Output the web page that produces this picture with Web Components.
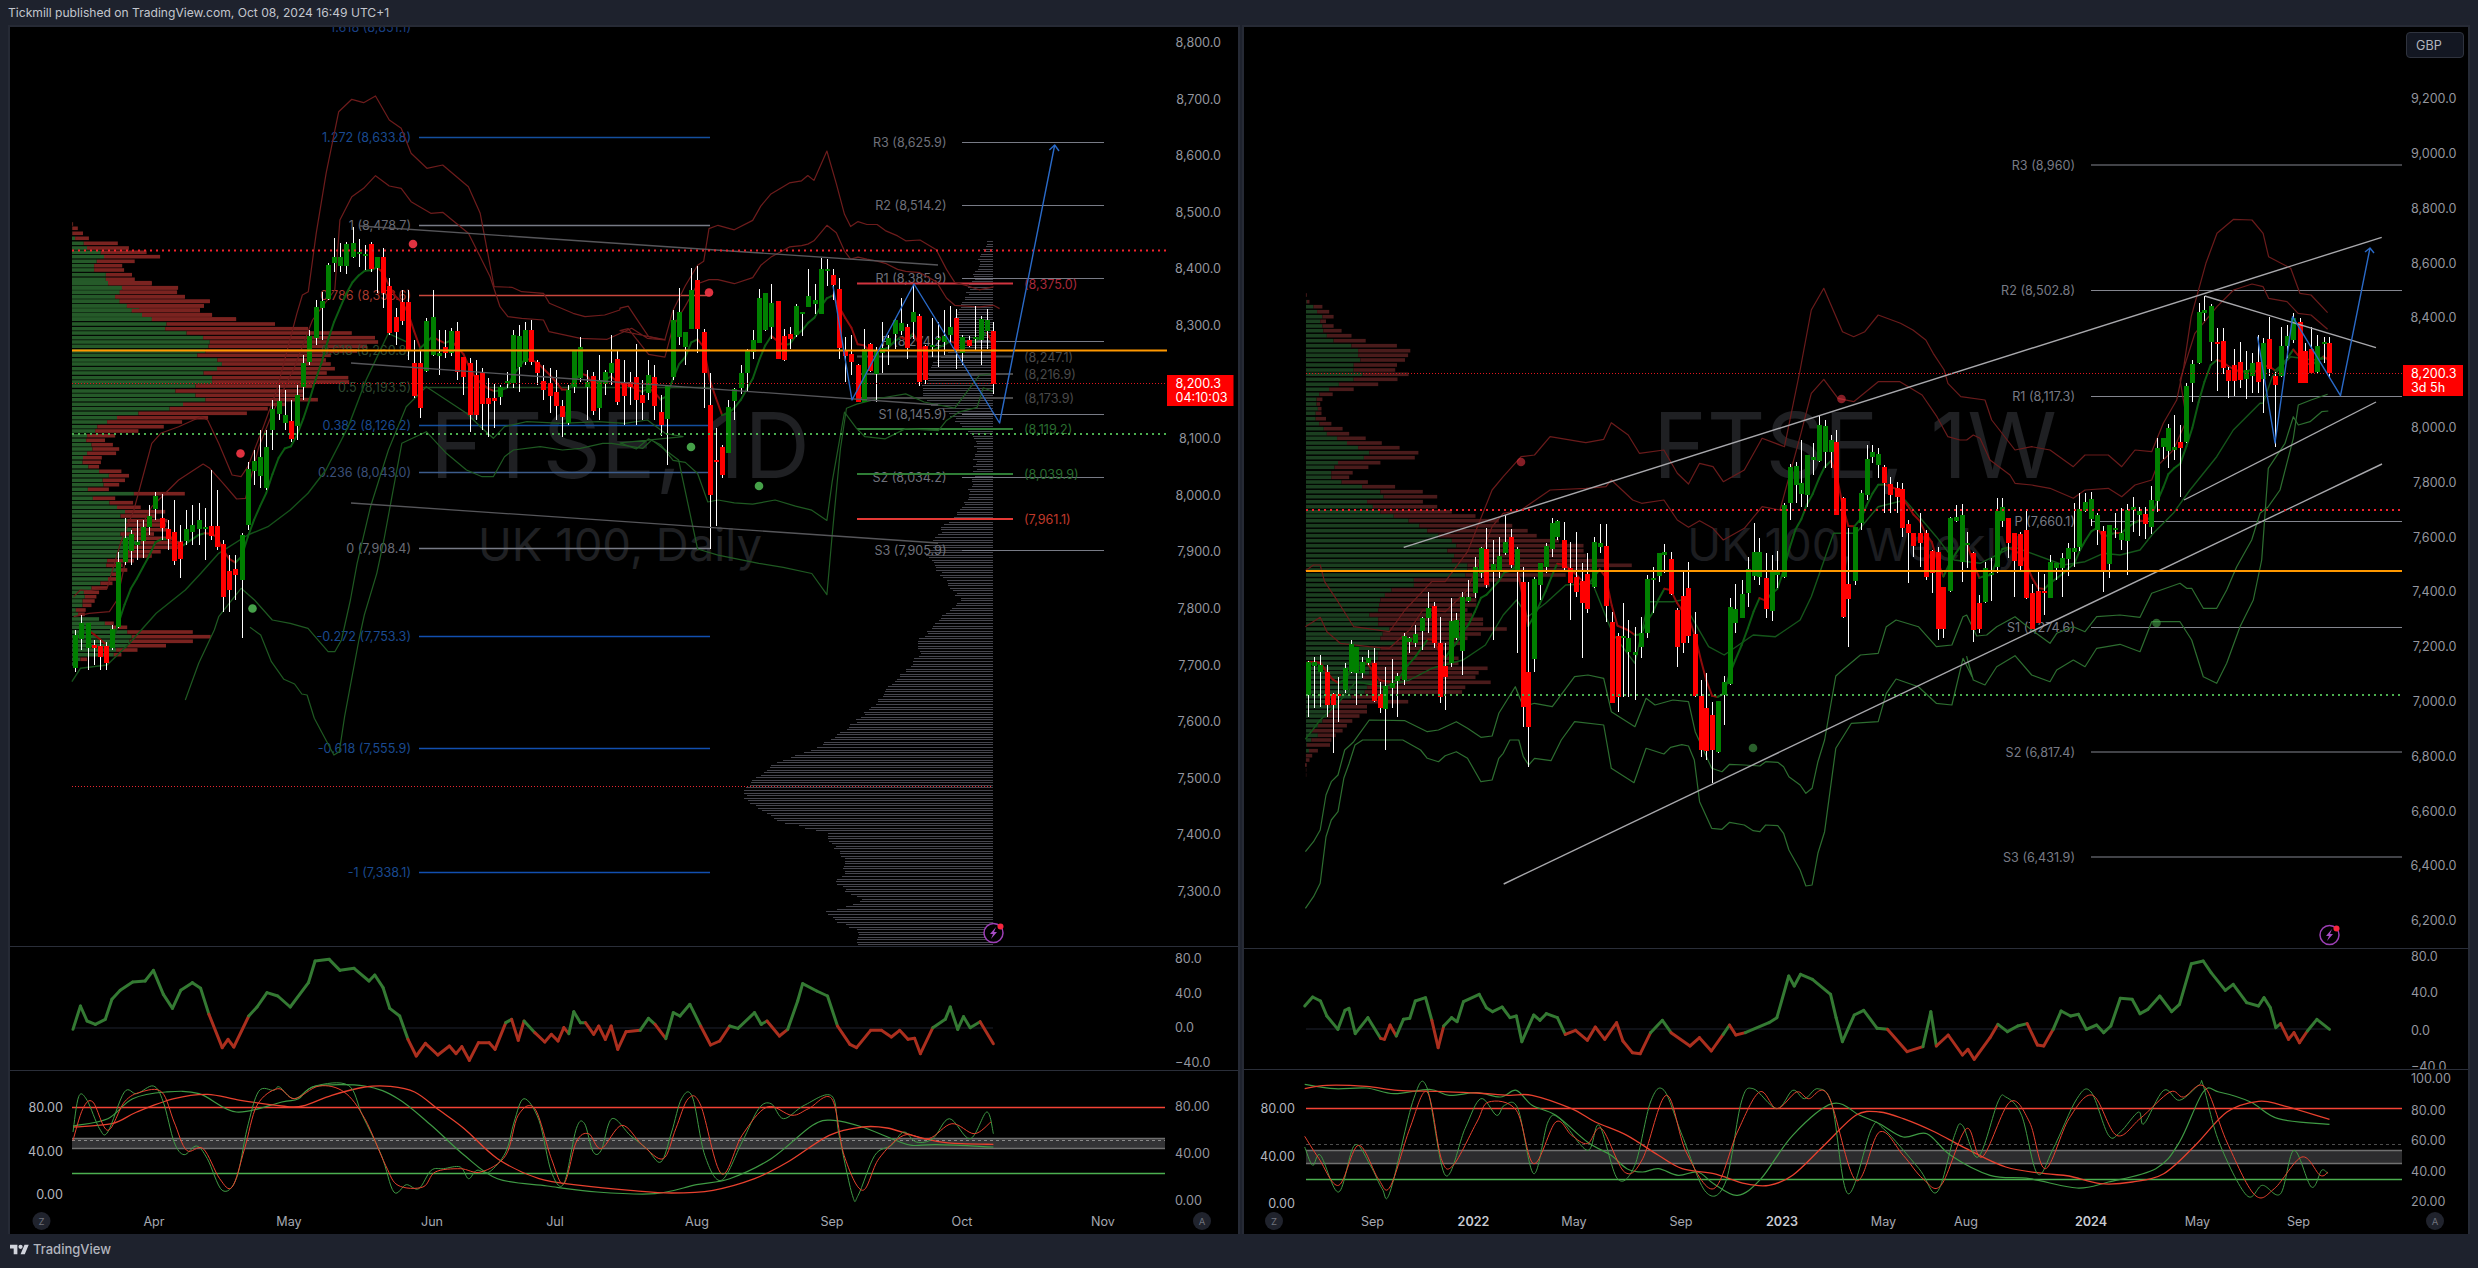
<!DOCTYPE html>
<html>
<head>
<meta charset="utf-8">
<title>FTSE snapshot</title>
<style>
  html, body { margin: 0; padding: 0; background: #1e222d; }
</style>
</head>
<body>
<tv-snapshot></tv-snapshot>
<script>
// ---------- helpers ----------
const fromCrop = (str, ox, fx, oy, fy) => str.trim().split(/\s+/).map(p => {
    const [x, y] = p.split(',').map(Number);
    return [ox + x / fx, oy + y / fy];
});
const toPoints = pts => pts.map(p => p[0].toFixed(1) + ',' + p[1].toFixed(1)).join(' ');
const line = (pts, color, w = 1, extra = '') =>
    `<polyline points="${toPoints(pts)}" fill="none" stroke="${color}" stroke-width="${w}" stroke-linejoin="round" ${extra}/>`;
// rounded version for the stochastic lines
function curve(pts, color, w = 1) {
    let d = `M${pts[0][0].toFixed(1)} ${pts[0][1].toFixed(1)}`;
    for (let i = 0; i < pts.length - 1; i++) {
        const a = pts[Math.max(i - 1, 0)], b = pts[i], c = pts[i + 1], e = pts[Math.min(i + 2, pts.length - 1)];
        const c1 = [b[0] + (c[0] - a[0]) / 6, b[1] + (c[1] - a[1]) / 6], c2 = [c[0] - (e[0] - b[0]) / 6, c[1] - (e[1] - b[1]) / 6];
        d += `C${c1[0].toFixed(1)} ${c1[1].toFixed(1)} ${c2[0].toFixed(1)} ${c2[1].toFixed(1)} ${c[0].toFixed(1)} ${c[1].toFixed(1)}`;
    }
    return `<path d="${d}" fill="none" stroke="${color}" stroke-width="${w}"/>`;
}
const hline = (x1, x2, y, color, w = 1, extra = '') =>
    `<line x1="${x1}" x2="${x2}" y1="${y}" y2="${y}" stroke="${color}" stroke-width="${w}" ${extra}/>`;
const label = (x, y, text, color, anchor = 'start', extra = '') =>
    `<text x="${x}" y="${y}" fill="${color}" text-anchor="${anchor}" dominant-baseline="central" ${extra}>${text}</text>`;

function candles(bars, bodyW) {
    let wicks = '', bodies = '';
    bars.forEach(b => {
        const hi = Math.min(b.hi, b.top), lo = Math.max(b.lo, b.bot);
        const x = Math.round(b.x);
        wicks += `<rect x="${x}" y="${hi}" width="1" height="${lo - hi}" fill="#fff"/>`;
        bodies += `<rect x="${x - (bodyW - 1) / 2}" y="${b.top}" width="${bodyW}" height="${Math.max(b.bot - b.top, 2)}" fill="${b.c === 'g' ? '#008000' : '#ff0000'}"/>`;
    });
    return `<g shape-rendering="crispEdges">${wicks}${bodies}</g>`;
}

function emaLine(bars, period) {
    const k = 2 / (period + 1);
    let prev = null, out = '', v = null;
    bars.forEach(b => {
        const close = b.c === 'g' ? b.top : b.bot;
        v = v === null ? close : v + (close - v) * k;
        if (prev) {
            const col = v < prev[1] ? '#0c5c12' : '#8f0b0b';
            out += `<line x1="${prev[0]}" y1="${prev[1]}" x2="${b.x}" y2="${v}" stroke="${col}" stroke-width="2" stroke-linecap="round"/>`;
        }
        prev = [b.x, v];
    });
    return out;
}

function profileRows(rows, x0, ox, fx, oy, fy, gCol, rCol, h = 3.6) {
    return '<g>' + rows.trim().split(/\s+/).map(r => {
        const [y, g, e] = r.split(',').map(Number);
        const py = oy + y / fy - h / 2, gx = ox + g / fx, ex = ox + e / fx;
        return `<rect x="${x0}" y="${py.toFixed(1)}" width="${Math.max(gx - x0, 0).toFixed(1)}" height="${h}" fill="${gCol}"/>` +
               `<rect x="${gx.toFixed(1)}" y="${py.toFixed(1)}" width="${Math.max(ex - gx, 0).toFixed(1)}" height="${h}" fill="${rCol}"/>`;
    }).join('') + '</g>';
}

function oscLine(pts, zeroY, gCol, rCol) {
    let out = '';
    for (let i = 1; i < pts.length; i++) {
        const col = (pts[i][1] + pts[i - 1][1]) / 2 < zeroY ? gCol : rCol;
        out += `<line x1="${pts[i - 1][0]}" y1="${pts[i - 1][1]}" x2="${pts[i][0]}" y2="${pts[i][1]}" stroke="${col}" stroke-width="3" stroke-linecap="round"/>`;
    }
    return out;
}

const bolt = (cx, cy) => `
    <circle cx="${cx}" cy="${cy}" r="9.5" fill="#000" stroke="#9c3fb5" stroke-width="1.5"/>
    <path d="M${cx + 2.5} ${cy - 6} L${cx - 3.5} ${cy + 1} H${cx - 0.5} L${cx - 2.5} ${cy + 6} L${cx + 3.5} ${cy - 1} H${cx + 0.5} Z" fill="#a64cc4"/>
    <circle cx="${cx + 7}" cy="${cy - 6.5}" r="3" fill="#f7263f"/>`;

// ---------- left chart data ----------
const leftBars = `g 635 668 630 672,g 623 639 615 650,g 623 648 623 670,r 645 648 640 665,r 646 657 640 670,r 646 663 642 670,g 629 648 625 650,g 562 627 552 628,g 538 562 518 565,g 534 551 530 565,
g 542 545 520 560,g 527 541 520 558,g 516 527 505 535,g 496 509 492 520,r 518 528 494 540,r 529 539 520 550,r 532 561 500 565,r 542 559 525 578,g 529 541 510 545,g 525 532 505 545,
g 520 529 503 545,g 527 529 508 560,r 526 536 470 540,r 526 547 490 550,r 544 597 540 612,r 571 590 555 612,r 569 575 555 600,g 535 580 533 638,g 469 525 462 530,g 461 471 450 485,
g 457 476 430 488,g 447 488 430 490,g 409 430 400 450,g 401 414 385 420,g 415 423 390 430,r 421 439 400 442,g 395 426 385 440,g 363 387 355 400,g 336 362 330 365,g 307 338 300 345,
g 301 308 292 340,g 265 299 263 300,g 257 263 238 272,g 257 266 243 272,g 244 266 242 274,g 243 257 227 258,g 252 254 239 267,g 254 255 245 270,r 244 269 242 272,g 257 268 257 293,
r 257 293 248 308,r 286 333 278 335,r 317 332 308 345,r 302 321 290 325,r 302 350 290 360,r 363 396 340 398,r 363 408 350 418,g 321 371 318 372,g 317 355 290 356,g 353 356 330 375,
r 347 353 330 358,g 331 353 328 356,r 331 372 322 380,r 357 377 358 395,r 363 415 358 432,r 375 415 360 420,r 372 404 368 430,r 398 404 378 437,r 398 401 384 428,g 387 397 385 405,
g 381 383 372 388,g 335 383 330 388,g 336 367 325 392,g 330 362 322 365,r 330 362 320 365,r 362 373 360 385,r 381 390 365 400,r 383 396 368 413,r 392 406 370 420,r 406 417 400 437,
g 390 423 385 425,g 351 387 350 393,g 347 378 337 382,g 382 387 370 420,r 376 411 372 415,g 380 408 355 420,g 372 384 370 395,g 363 373 335 385,r 359 402 350 405,r 383 396 360 425,
r 382 387 372 405,r 377 400 344 425,r 395 403 380 420,g 375 393 360 400,r 377 406 365 420,r 412 425 395 436,g 386 419 385 465,g 320 377 310 380,g 312 337 288 345,g 332 347 335 365,
g 290 329 268 329,r 280 329 266 353,r 332 373 329 408,r 405 495 373 549,r 460 462 428 526,r 447 475 445 478,g 407 453 400 453,g 389 401 388 420,g 373 388 365 394,g 351 373 349 392,
g 340 352 330 359,g 298 343 289 341,g 293 330 293 331,g 303 327 284 339,r 301 359 301 359,r 336 360 329 361,r 334 339 327 349,g 306 335 304 337,g 312 314 312 336,g 296 307 269 304,
g 300 304 284 314,g 269 314 258 314,g 269 270 259 286,r 275 285 269 300,r 289 348 278 359,r 351 356 337 382,r 354 362 335 375,r 365 402 364 402,g 349 402 329 402,r 344 371 343 372,
g 350 374 347 402,g 348 353 322 373,g 338 345 335 365,g 320 334 318 349,g 323 331 298 335,r 327 348 324 359,g 312 322 284 339,r 316 382 314 386,r 346 380 345 384,g 345 347 318 357,
g 338 340 322 367,g 336 342 310 355,g 327 335 306 344,r 318 351 309 369,g 337 353 335 365,r 340 346 336 347,g 337 339 306 351,g 319 340 316 365,g 320 331 309 349,r 331 384 322 394`
    .split(',').map((s, i) => {
        const [c, top, bot, hi, lo] = s.trim().split(' ');
        return { x: 75.3 + 6.16 * i, c, top: +top, bot: +bot, hi: +hi, lo: +lo };
    });

const leftProfile = {
    top: `672,183,185 685,183,197 700,183,210 715,190,225 730,212,298 744,220,326 757,255,371 770,263,405 784,245,341 797,238,309 810,238,314 824,268,334 838,268,341 851,274,384 864,310,450 877,303,448 890,292,468 904,302,531 917,322,516 930,352,506 944,360,536 957,384,597`,
    rest: `8,242,340 23,273,399 37,268,396 50,258,414 64,268,470 78,284,457 92,295,448 105,318,475 118,340,529 132,373,616 146,370,690 159,418,788 173,455,840 186,470,847 199,467,822 213,460,800 226,442,741 240,487,730 252,497,741 266,486,750 279,456,732 293,475,780 306,475,782 318,438,700 333,393,680 346,438,679 359,460,712 373,410,640 386,380,600 400,310,553 413,262,466 426,240,408 440,218,367 453,213,310 467,195,258 481,193,235 494,205,253 507,207,267 520,195,260 533,186,228 547,185,226 560,198,222 574,222,272 587,244,289 601,230,280 614,232,267 628,197,244 641,300,414 655,208,258 668,245,298 682,262,315 695,280,370 708,270,350 722,285,375 735,280,372 749,295,378 762,270,345 775,300,395 788,315,410 802,300,400 815,285,360 828,280,340 842,240,300 856,238,275 870,260,285 883,250,270 897,242,262 910,225,252 924,205,240 937,188,222 950,190,216 963,185,212 976,185,205 990,170,192 1003,175,190 1017,222,222 1030,235,255 1042,250,285 1056,285,432 1070,295,472 1084,290,432 1097,285,372 1110,260,308 1124,255,272 1138,180,195 1152,168,175`
};

// grey profile on the right of the left chart: y -> left edge
const greyKeys = [[241,987],[256,981],[275,975],[290,969],[310,957],[340,957],[350,950],[365,932],[385,924],[400,924],[415,950],[436,975],[470,975],[495,969],[510,961],[525,944],[555,926],[575,942],[600,961],[610,950],[620,939],[640,919],[655,919],[660,914],[675,901],[690,887],[710,868],[725,851],[745,822],[757,790],[765,772],[777,757],[787,746],[800,746],[820,776],[833,827],[845,834],[860,845],[875,845],[880,834],[890,845],[900,865],[912,826],[920,834],[930,859],[945,859]];
function greyProfile() {
    let out = '', seed = 7;
    for (let y = 241; y < 946; y += 2.53) {
        let k = 0;
        while (k < greyKeys.length - 2 && greyKeys[k + 1][0] < y) k++;
        const [y0, x0] = greyKeys[k], [y1, x1] = greyKeys[k + 1];
        seed = (seed * 73 + 41) % 101;
        const x = x0 + (x1 - x0) * (y - y0) / (y1 - y0) + (seed % 5 - 2);
        out += `<rect x="${x.toFixed(0)}" y="${Math.round(y)}" width="${(993 - x).toFixed(0)}" height="1" fill="#45454d"/>`;
    }
    return `<g shape-rendering="crispEdges">${out}</g>`;
}

function leftPrice() {
    const z1 = s => fromCrop(s, 0, 2.53, 0, 3), z2 = s => fromCrop(s, 620, 2.45, 0, 2.45), z6 = s => fromCrop(s, 0, 2.24, 280, 3), z10 = s => fromCrop(s, 250, 2.8, 540, 3);
    const red = '#6e1c1c', grn = '#1f5a22';
    const outer = [...z6(`165,950 180,930 200,932 215,928 240,925 270,790 300,690 340,490 360,460 400,440 450,410 465,420 490,490 520,585 540,590 555,560 590,440 620,330 665,100`),
        ...z1(`765,885 780,875 800,700 825,520 857,335 890,298 920,308 950,288 985,360 1015,385 1040,460 1080,505 1120,495 1185,560 1215,640 1250,860 1295,862 1320,875 1375,880 1390,910 1450,940 1480,950 1530,945 1568,930`),
        ...z2(`0,755 20,750 40,780 70,825 110,832 130,760 160,700 190,650 205,640 218,560 240,552 280,563 325,540 345,505 370,475 415,448 445,443 460,430 475,442 507,370 530,450 550,525 565,555 583,543 605,550 630,550 650,565 680,578 700,590 735,588 775,612 800,660 820,692 850,700 880,710 915,703`)];
    const inner = [...z6(`165,1010 200,1000 245,995 262,960 280,850 300,780 340,680 400,600 455,552 470,565 500,610 530,657 550,655 580,500 610,400 660,260 700,120 750,30`),
        ...z1(`860,660 890,590 920,565 950,527 985,558 1015,565 1040,605 1090,640 1120,637 1185,700 1215,770 1240,830 1265,920 1285,950 1320,955 1375,960`),
        ...z6(`1230,155 1300,175 1360,178 1415,145 1450,175 1490,180`),
        ...z2(`0,810 20,805 40,830 70,868 110,875 130,800 160,750 190,695 218,685 240,685 280,695 325,680 345,650 370,630 415,605 445,602 460,598 475,590 507,552 530,570 550,615 565,635 583,630 605,635 630,640 650,645 680,660 700,665 735,668 775,690 800,730 820,748 850,750 880,752 915,748 930,756`)];
    const gA = [...z6(`415,1260 445,1150 480,1050 490,1010 540,925 570,960 610,1020 650,1030 690,1045 735,1115 750,1115 765,1080 785,960 800,850 830,680 870,510 910,380 955,320 1000,360 1045,400 1080,445 1105,475 1130,440 1180,425 1260,430 1340,425 1400,430 1450,420 1490,460 1530,470`),
        ...z2(`0,1085 40,1100 70,1075 100,1090 130,1128 160,1133 190,1160 215,1230 240,1225 280,1232 325,1235 380,1225 430,1240 470,1250 507,1275 520,1180 550,1010 580,1050 600,1070 650,1075 700,1050 780,1055 800,1030 830,1010 875,998 890,950 915,960`)];
    const gB = [...z10(`0,262 30,285 60,365 95,418 125,432 145,462 160,465 180,535 235,645 250,635 265,530 305,300 320,225 355,100 375,0`),
        ...z6(`900,490 955,455 1000,520 1045,570 1080,590 1105,590 1130,530 1150,510 1210,500 1260,510 1300,505 1350,490 1370,490 1440,505 1460,480 1490,510 1520,540`),
        ...z2(`190,1345 240,1360 340,1380 400,1390 470,1405 507,1457 520,1310 540,1100 555,1000 580,990 640,975 700,965 745,985 820,1000 850,960 880,920 915,915`)];
    const slow = z6(`161,1205 180,1165 240,1155 290,1090 350,1000 415,930 450,880 490,820 555,765 600,740 650,690 690,640 730,570 780,440 820,300 870,160 918,190`);

    const fib = [
        ['1.618 (8,851.1)', 27, '#124a9c', '#1a3f80', 0], ['1.272 (8,633.8)', 137.5, '#144f9e', '#1a4a90', 1], ['1 (8,478.7)', 225.5, '#787b86', '#6a6c76', 1],
        ['0.786 (8,356.6)', 295.5, '#c8473d', '#a8392f', 1], ['0.618 (8,260.8)', 350, '#2f5a30', '#2f4a30', 1], ['0.5 (8,193.5)', 387.5, '#214a24', '#2f4a30', 1],
        ['0.382 (8,126.2)', 425.5, '#144f9e', '#1a4a90', 1], ['0.236 (8,043.0)', 472.5, '#3c5c8c', '#3a4f78', 1], ['0 (7,908.4)', 548.5, '#787b86', '#6a6c76', 1],
        ['-0.272 (7,753.3)', 636.5, '#124fb0', '#1a4a90', 1], ['-0.618 (7,555.9)', 748.5, '#124fb0', '#1a4a90', 1], ['-1 (7,338.1)', 872.5, '#124fb0', '#1a4a90', 1]];
    const pivots = [['R3 (8,625.9)', 142.5], ['R2 (8,514.2)', 205.5], ['R1 (8,385.9)', 278.5], ['P (8,274.2)', 341.5], ['S1 (8,145.9)', 414.5], ['S2 (8,034.2)', 477.5], ['S3 (7,905.9)', 550.5]];
    const levels = [['(8,375.0)', 283.5, '#d0343f', '#a8283a'], ['(8,247.1)', 356.5, '#4a4a4a', '#4a4a4a'], ['(8,216.9)', 374, '#4a4a4a', '#4a4a4a'], ['(8,173.9)', 398, '#4a4a4a', '#4a4a4a'],
        ['(8,119.2)', 429, '#2f7d36', '#2a6d30'], ['(8,039.9)', 474, '#2f7d36', '#2a6d30'], ['(7,961.1)', 519, '#e53935', '#c0392b']];

    return `
    ${label(620, 445, 'FTSE, 1D', '#1f2023', 'middle', 'font-size="91"')}
    ${label(620, 544, 'UK 100, Daily', '#1f2023', 'middle', 'font-size="45.5"')}
    ${profileRows(leftProfile.top, 72, 0, 2.53, 0, 3, '#255a29', '#7a2320')}
    ${profileRows(leftProfile.rest, 72, 0, 2.24, 280, 3, '#255a29', '#7a2320')}
    ${greyProfile()}
    ${hline(72, 993, 786.5, '#e8262f', 1, 'stroke-dasharray="1 2"')}
    ${fib.map(f => (f[4] ? hline(419, 710, f[1], f[2], 1.3) : '') + label(411, f[1], f[0], f[3], 'end')).join('')}
    ${pivots.map(p => hline(962, 1104, p[1], '#787b86', 1.2) + label(946.5, p[1], p[0], '#6f717b', 'end')).join('')}
    ${levels.map(l => hline(857, 1013, l[1], l[2], 2) + label(1024, l[1] + 0.5, l[0], l[3])).join('')}
    ${line(outer, red, 1.2)}${line(inner, red, 1.2)}${line(gA, grn, 1.2)}${line(gB, grn, 1.2)}
    ${line(slow, '#15521a', 1.4)}
    ${emaLine(leftBars, 8)}
    ${candles(leftBars, 5)}
    ${line([[360, 226], [938, 265]], '#56565a', 1.3)}${line([[351, 363], [938, 405]], '#56565a', 1.3)}${line([[351, 503], [938, 543]], '#56565a', 1.3)}
    ${hline(72, 1167, 350.5, '#ff9800', 2)}
    ${hline(72, 1167, 250.5, '#f5222d', 2, 'stroke-dasharray="2 4"')}
    ${hline(72, 1167, 434, '#4caf50', 2, 'stroke-dasharray="2 4"')}
    ${hline(72, 1167, 383.5, '#e0161e', 1, 'stroke-dasharray="1 2"')}
    ${line([[833, 286], [852, 400], [914, 284], [999.6, 423], [1054.7, 145]], '#2a6ac8', 1.4)}
    ${line([[1049.4, 150], [1054.7, 145], [1059, 151]], '#2a6ac8', 1.4)}
    <g fill="#f23645" opacity=".92"><circle cx="413" cy="244" r="4.3"/><circle cx="709" cy="292.5" r="4.3"/><circle cx="240.5" cy="453.5" r="4.3"/></g>
    <g fill="#4caf50" opacity=".92"><circle cx="691" cy="447" r="4.3"/><circle cx="759" cy="486" r="4.3"/><circle cx="252.5" cy="608.5" r="4.3"/></g>
    ${bolt(993.5, 933)}`;
}

// ---------- right chart data ----------
const rightBars = [
    [`63 g 1145 1245 1143 1310,77 g 1145 1158 1130 1285,90 g 1155 1175 1125 1282,105 r 1175 1275 1155 1310,118 r 1243 1275 1240 1420,131 r 1243 1247 1190 1325,145 g 1165 1230 1150 1240,158 g 1092 1175 1080 1180,170 g 1100 1180 1100 1275,183 g 1145 1180 1130 1195,196 g 1135 1150 1110 1155,210 r 1150 1262 1103 1265,223 r 1243 1285 1205 1300,236 g 1218 1288 1160 1410,250 g 1210 1223 1137 1285,263 g 1187 1202 1180 1310,277 g 1068 1200 1060 1215,290 g 1075 1085 1070 1120,303 g 1062 1090 1035 1100,317 g 1015 1052 1010 1110,331 g 985 1015 935 1060,344 r 978 1090 965 1105,358 r 1090 1250 1010 1270,370 r 1158 1192 1090 1290,382 g 1023 1150 955 1160,395 g 1020 1075 1000 1080,408 g 952 1112 935 1185,422 g 952 962 900 965,436 g 862 940 830 955,450 g 804 878 800 895,462 r 808 915 745 925,476 g 852 875 780 1080,490 g 828 872 770 895,503 g 787 818 705 825,517 r 772 855 747 865,530 g 808 870 800 1120,544 r 907 1280 860 1340,556 r 1177 1342 905 1460,570 g 898 1138 890 1175,582 g 848 915 850 960,595 g 798 860 790 880,609 g 730 808 715 830,621 g 724 770 720 780,636 r 780 865 725 870,649 r 865 908 785 1020,662 r 892 935 757 950,676 r 903 968 850 1135,688 r 883 987 820 1000,703 g 787 922 770 925,716 g 790 802 733 820,730 r 797 977 733 1025,743 r 1027 1270 995 1270,756 r 1068 1250 1060 1295,769 g 1068 1075 970 1250,780 g 1075 1115 1020 1250,795 g 1115 1125 1040 1260,808 g 1060 1100 1010 1135,821 g 898 1058 885 1075,835 g 895 900 860 1000,848 g 820 887 820 905,861 g 816 824 792 880,875 r 838 942 815 945,889 r 990 1100 985 1160,902 r 948 1090 870 1120,915 r 925 1068 845 1090,929 r 1062 1247 995 1250,943 r 1248 1410 1200 1432,955 r 1285 1412 1180 1440,968 r 1305 1410 1265 1510,980 g 1263 1415 1262 1420,994 g 1205 1245 1188 1335,1007 g 982 1212 955 1215,1020 g 988 1030 912 1060,1034 g 942 1013 900 1010,1048 g 868 940 830 980,1061 g 815 887 730 900,1074 g 815 892 775 915,1088 r 895 987 820 1015,1101 g 870 992 825 1022,1114 g 876 884 812 925,1128 g 675 892 670 895,1142 g 562 668 552 720,1155 g 558 614 545 670,1168 g 610 642 480 680,1180 g 525 646 525 680,1193 g 532 540 490 585,1207 g 435 544 405 545,1220 g 438 515 420 565,1234 g 480 515 465 565,1246 r 487 705 450 705,1260 r 655 1010 650 1015,1273 r 912 958 745 1100,1287 g 740 902 740 915,1301 g 638 728 630 750,1314 g 538 645 495 660,1327 g 516 532 495 550,1340 g 522 555 505 595,1354 r 560 610 555 700,1367 r 612 645 590 700,1381 r 625 652 605 700,1393 r 628 743 610 770,1406 r 733 758 720 910,1419 r 760 797 760 830,1433 r 760 790 700 860,1446 r 760 892 750 900,1460 r 813 880 810 940,1473 r 815 1048 800 1080,1486 r 922 1048 930 1075,1500 g 713 932 710 935,1514 g 710 722 675 725,1527 g 706 845 672 905`, 1280, 2.24, 280, 3],
    [`22 g 430 436 395 505,40 r 460 690 455 727,58 r 610 688 585 700,76 g 505 605 487 610,94 g 520 524 475 603,110 g 333 500 293 520,127 g 322 362 295 382,145 r 355 428 355 475,163 r 400 482 400 590,181 r 402 497 395 517,199 r 390 593 330 597,217 r 580 687 553 688,235 r 573 668 510 668,253 r 573 576 523 645,271 g 487 593 465 595,289 g 488 503 490 540,307 g 475 505 460 590,325 g 445 478 430 527,343 g 445 455 310 500,358 g 328 440 278 452,376 g 307 332 280 335,394 g 298 356 275 378,412 g 345 390 340 435,430 r 393 510 378 575,448 g 375 492 375 533,466 g 384 386 340 415,484 g 400 420 325 450,502 g 330 423 312 525,520 g 322 330 292 395,538 g 333 345 322 407,556 r 342 372 320 417,574 g 300 380 258 403,592 g 145 302 115 335,610 g 115 140 115 178,625 g 85 152 72 205,643 g 140 150 45 180,661 r 126 144 75 290`, 1960, 3, 400, 3],
    [`777 g 1158 1325 1148 1330,793 g 1092 1148 1080 1205,810 g 937 1090 908 1092,826 g 930 938 888 962,843 g 918 1025 912 1083,860 r 1025 1030 985 1172,875 r 1023 1103 985 1122,890 r 1110 1142 1100 1193,907 r 1095 1142 1048 1188,923 r 1087 1140 1025 1165,940 g 1110 1137 1052 1198,956 g 1090 1127 1060 1178,970 r 1087 1147 1005 1180,986 g 1030 1137 1015 1238,1002 r 1018 1107 950 1128,1018 r 1128 1155 1115 1340,1035 g 1038 1127 980 1130,1050 g 1008 1038 975 1075,1067 g 955 1020 938 1030,1084 r 965 1150 955 1150,1100 r 1052 1148 1030 1150,1116 r 1048 1120 980 1120,1132 g 1038 1115 1005 1118,1149 g 1027 1030 1010 1090,1165 r 1030 1120 1012 1132`, 1900, 2.713, 0, 3]
].flatMap(([s, ox, fx, oy, fy]) => s.split(',').map(r => {
    const [x, c, top, bot, hi, lo] = r.split(' ');
    return { x: ox + x / fx, c, top: Math.round(oy + top / fy), bot: Math.round(oy + bot / fy), hi: Math.round(oy + hi / fy), lo: Math.round(oy + lo / fy) };
}));

const rightProfile = `45,58,60 65,60,66 80,75,95 95,83,110 110,95,120 124,90,103 138,95,120 152,97,138 167,105,160 182,120,192 197,160,262 212,175,292 226,175,287 240,180,280 255,165,262 270,165,258 283,185,288 298,165,263 313,132,220 328,110,165 343,88,118 358,82,95 372,82,90 386,85,93 400,80,93 416,80,103 431,88,115 446,98,140 461,105,155 475,128,192 489,150,228 503,175,268 518,200,310 533,188,302 548,130,225 562,122,198 578,115,163 592,115,155 606,138,197 620,184,258 635,225,320 650,232,352 665,195,320 680,208,352 695,225,385 708,255,438 722,288,490 737,312,520 752,330,555 767,355,575 782,385,625 797,395,680 812,375,680 827,390,685 842,385,735 856,420,788 870,420,700 885,415,640 900,300,540 915,300,470 930,250,440 945,235,440 960,225,440 975,222,440 990,220,420 1005,200,430 1018,220,455 1032,220,455 1047,245,508 1062,230,450 1075,225,420 1090,258,410 1105,225,380 1120,220,365 1135,220,400 1150,190,400 1165,200,465 1178,200,445 1192,185,438 1207,220,472 1222,195,415 1236,190,408 1250,160,240 1265,135,287 1280,130,195 1295,110,195 1308,105,178 1323,95,162 1337,85,150 1352,70,140 1366,85,125 1380,70,115 1395,60,112 1412,65,85 1427,58,72 1440,58,66 1455,56,60 1470,58,59 1485,58,59`;

function rightPrice() {
    const z5 = s => fromCrop(s, 1900, 2.713, 0, 3), z7 = s => fromCrop(s, 1280, 2.24, 280, 3), z9 = s => fromCrop(s, 1960, 3, 400, 3), z12 = s => fromCrop(s, 1280, 2.24, 740, 3);
    const red = '#6b1b1b', grn = '#2d6e30';
    const r1 = [...z7(`57,872 75,855 90,855 100,905 130,965 165,1040 245,1055 280,990 340,905 370,905 420,815 475,630 500,590 540,530 570,525 605,470 685,488 725,478 742,428 780,465 805,520 860,510 890,580 915,612 940,550 970,560 993,605 1040,570 1080,475 1130,500 1165,270 1190,90 1218,25 1260,155 1285,170 1310,155 1340,105 1390,130`),
        ...z5(`35,990 70,1020 90,1060 120,1110 130,1150 165,1190`),
        ...z9(`75,0 95,60 165,150 215,140 270,150 340,200 375,165 445,165 485,200 525,150 575,155 610,70 650,0`),
        ...z5(`770,1100 790,950 830,790 860,700 905,658 955,660 985,700 1000,770 1060,805 1085,880 1115,885 1160,938`)];
    const r2 = [...z7(`57,1040 90,1012 105,1055 135,1090 200,1100 245,1105 290,1050 320,990 370,995 420,930 475,740 500,700 540,690 605,630 685,625 730,620 742,600 790,660 810,670 860,660 890,720 915,742 940,722 970,745 993,780 1040,745 1080,680 1120,690 1165,470 1190,340 1218,298 1250,355 1285,365 1340,305 1380,305`),
        ...z5(`0,1145 60,1185 100,1250 130,1310`),
        ...z9(`0,120 20,120 40,105 60,115 90,180 150,225 165,250 215,255 270,265 340,295 375,270 445,265 485,290 525,255 575,240 590,200 640,150 680,60`),
        ...z5(`760,1140 800,1000 860,920 905,870 955,852 985,860 1000,895 1050,905 1080,940 1115,945 1160,988`)];
    const g1 = [...z12(`57,335 75,305 90,270 103,165 115,125 130,105 145,30 165,5`),
        ...z7(`200,1320 280,1322 330,1355 355,1350 395,1325 420,1345 450,1372 475,1368 490,1300 527,1220 545,1280 570,1270 610,1280 660,1190 690,1185 725,1195 742,1295 795,1340 820,1255 840,1275 880,1260 915,1265 930,1355`),
        ...z12(`967,85 990,95 1007,73 1040,75 1075,78 1088,65 1115,67 1128,80 1140,110 1165,135 1178,160 1192,145 1205,65 1220,0`),
        ...z7(`1245,1188 1260,1170 1300,1125 1340,1120 1358,1040 1380,1020 1430,1040 1470,1100 1505,1095 1530,1010`),
        ...z9(`20,645 50,708 80,705 110,680 165,650 215,690 270,730 290,700 340,680 375,695 410,650 480,645 540,652 575,580 660,550 680,565 695,565 730,625 770,625 800,570 830,500 875,420 900,340 925,320 960,270 1000,115 1015,15`),
        ...z5(`1115,1200 1160,1183`)];
    const g2 = [...z12(`57,505 75,470 90,430 103,290 115,240 130,215 143,115 155,70 168,15 185,0 275,0 315,30 330,55 355,65 370,47 395,35 420,55 450,125 475,120 490,55 500,40 515,0 535,0 545,50 557,75 570,55 607,62 630,0`),
        ...z7(`660,1325 725,1335`),
        ...z12(`742,85 793,128 820,25 860,42 875,22 900,14 915,18 928,60 940,185 967,265 990,268 1007,247 1040,255 1060,272 1075,275 1088,255 1115,257 1128,280 1140,330 1165,390 1178,438 1192,435 1205,340 1220,275 1245,25`),
        ...z7(`1280,1330 1340,1325 1358,1240 1380,1197 1430,1220 1470,1270 1505,1275 1530,1135 1550,1190`),
        ...z9(`20,770 40,840 75,855 110,800 165,767 215,825 270,845 290,810 340,780 375,800 410,745 480,733 540,755 575,665 660,665 695,720 730,830 770,850 800,790 840,680 880,600 905,480 925,205 975,130 1000,50 1015,75 1050,65 1085,35 1105,33`)];
    const slow = [...z7(`57,1378 90,1320 130,1270 170,1205 230,1220 290,1200 340,1165 410,1140 460,1095 500,1005 530,960 555,1010 595,970 640,915 700,910 745,1060 795,1150 825,965 880,965 900,960 960,1100 995,1125 1060,1065 1110,1070 1165,1020 1190,950 1240,760 1290,760 1340,680 1400,660 1470,770 1510,840 1568,850`),
        ...z9(`160,440 310,495 375,485 430,460 480,465 540,450 580,400 640,340 690,270 770,170 820,90 900,10`),
        ...z5(`985,1210 1010,1130 1060,1070 1120,1080 1160,1075`)];
    const pivots = [['R3 (8,960)', 165], ['R2 (8,502.8)', 290.5], ['R1 (8,117.3)', 396.5], ['P (7,660.1)', 521.5], ['S1 (7,274.6)', 627.5], ['S2 (6,817.4)', 752], ['S3 (6,431.9)', 857]];
    const white = '#a8a8ac';
    return `
    ${label(1855, 445, 'FTSE, 1W', '#1f2023', 'middle', 'font-size="91"')}
    ${label(1855, 544, 'UK 100, Weekly', '#1c1d20', 'middle', 'font-size="45.5"')}
    ${profileRows(rightProfile, 1306, 1280, 2.24, 280, 3, '#1b3f20', '#4a1b1b')}
    ${pivots.map(p => hline(2091, 2402, p[1], '#84868f', 1.2) + label(2075, p[1], p[0], '#787b86', 'end')).join('')}
    ${line(r1, red, 1.2)}${line(r2, red, 1.2)}${line(g1, grn, 1.2)}${line(g2, grn, 1.2)}
    ${line(slow, '#14561a', 1.4)}
    ${emaLine(rightBars, 8)}
    ${candles(rightBars, 5)}
    ${line([[1403.7, 547.3], [2381.7, 237.3]], white, 1.4)}
    ${line([[1503.7, 884], [2382, 464]], white, 1.4)}
    ${line([[2184, 500], [2376, 402]], white, 1.4)}
    ${line([[2204.8, 296], [2376, 347.7]], white, 1.4)}
    ${hline(1306, 2402, 571, '#ff9800', 2)}
    ${hline(1306, 2402, 510, '#f5222d', 2, 'stroke-dasharray="2 4"')}
    ${hline(1306, 2402, 695, '#4caf50', 2, 'stroke-dasharray="2 4"')}
    ${hline(1306, 2402, 373.5, '#e0161e', 1, 'stroke-dasharray="1 2"')}
    ${line([[2257.5, 336.7], [2275, 443], [2292.6, 316.7], [2340.5, 395.7], [2370, 248]], '#2a6ac8', 1.4)}
    ${line([[2365, 252], [2370, 248], [2374, 253]], '#2a6ac8', 1.4)}
    <g fill="#f23645" opacity=".55"><circle cx="1521" cy="462" r="4.3"/><circle cx="1841.5" cy="399" r="4.3"/></g>
    <g fill="#4caf50" opacity=".55"><circle cx="1753" cy="748" r="4.3"/><circle cx="2156.5" cy="623" r="4.3"/></g>
    ${bolt(2329.5, 935)}`;
}

// ---------- oscillators ----------
function leftOsc() {
    const p = fromCrop(`88,385 97,315 105,360 115,370 127,355 135,295 145,268 160,243 175,240 185,208 197,280 208,322 218,268 232,245 242,262 252,340 268,440 275,415 282,438 300,345 310,318 322,275 335,285 350,318 372,245 380,180 397,175 410,208 427,202 445,240 452,222 462,260 470,322 482,345 492,415 502,465 513,427 528,462 542,435 550,458 557,437 566,478 577,425 590,425 597,445 610,365 617,355 625,418 632,360 645,395 657,423 665,400 673,420 680,380 686,398 692,332 700,365 706,365 716,400 722,375 730,415 737,375 745,445 755,392 772,388 782,352 790,370 803,413 812,335 820,345 832,310 845,375 857,432 868,420 880,375 890,382 910,335 918,370 925,360 940,405 950,385 962,300 968,248 985,270 998,285 1010,375 1025,430 1033,440 1050,388 1063,388 1075,408 1085,388 1095,415 1103,412 1110,458 1125,380 1140,355 1146,318 1155,385 1162,347 1170,380 1182,362 1198,428`, 0, 1.206, 900, 3);
    return hline(72, 993, 1027, '#14171f', 1.5) + oscLine(p, 1027.5, '#347a33', '#ab2f1e');
}
function rightOsc() {
    const p = fromCrop(`82,315 92,288 102,300 110,345 124,385 133,328 138,322 146,398 162,350 178,412 183,415 190,372 198,405 207,355 215,352 222,300 235,290 243,358 251,440 258,375 268,350 275,362 283,302 303,280 312,320 320,332 332,318 342,350 350,345 357,422 372,342 380,358 388,338 402,350 412,400 425,388 440,418 450,378 462,415 477,365 485,420 497,455 507,458 520,395 535,358 546,395 570,435 582,410 597,450 612,400 620,372 628,402 640,395 670,365 680,350 695,225 702,255 710,220 725,235 748,280 755,350 763,422 778,342 790,328 807,382 820,385 845,452 865,437 875,332 882,435 897,402 915,462 922,445 930,475 950,410 960,370 972,392 985,375 997,368 1010,432 1018,435 1030,385 1040,330 1052,345 1062,340 1072,385 1085,372 1094,395 1103,375 1115,292 1130,295 1140,338 1150,325 1165,285 1180,332 1190,310 1205,188 1220,180 1230,215 1248,268 1258,250 1275,305 1290,315 1297,290 1305,320 1312,380 1318,368 1328,415 1335,395 1342,425 1352,390 1364,355 1380,385`, 1240, 1.2666, 900, 3);
    return hline(1306, 2329, 1028, '#14171f', 1.5) + oscLine(p, 1029, '#347a33', '#ab2f1e');
}
function leftStoch() {
    const z = s => fromCrop(s, 0, 1.206, 900, 3);
    return `
    <rect x="72" y="1136.5" width="1093" height="10" fill="#333335"/>
    ${hline(72, 1165, 1136.5, '#707070', 1.6)}${hline(72, 1165, 1146.5, '#707070', 1.6)}
    ${hline(72, 1165, 1138.5, '#8a8a8a', 1, 'stroke-dasharray="3 3"')}
    ${hline(72, 1165, 1105.5, '#f44336', 1.4)}${hline(72, 1165, 1171.5, '#4caf50', 1.4)}
    ${curve(z(`88,672 130,650 160,590 200,570 240,575 285,630 340,600 360,590 380,553 440,552 480,590 520,670 560,760 600,830 660,852 720,870 790,875 840,848 880,830 930,770 980,670 1005,655 1040,675 1080,715 1100,730 1130,728 1198,735`), '#3f9a44', 1.2)}
    ${curve(z(`88,675 135,665 165,630 210,590 250,577 290,595 340,612 365,612 400,580 440,555 470,553 500,570 530,625 560,680 600,770 650,830 700,850 760,865 810,873 860,865 910,830 950,780 1000,700 1040,675 1070,678 1100,700 1130,718 1160,725 1198,727`), '#e8412e', 1.3)}
    ${curve(z(`88,690 95,583 105,595 120,680 130,690 150,570 165,575 185,552 197,600 210,720 222,758 237,732 250,770 268,865 285,830 298,680 312,568 330,565 337,555 355,590 380,552 420,550 437,640 460,760 475,870 490,848 505,860 520,805 535,800 555,795 565,830 575,805 590,810 610,750 620,660 632,590 650,655 665,810 680,845 695,680 705,665 715,748 725,745 738,650 760,700 780,740 797,780 810,690 822,590 835,585 850,760 870,835 895,720 915,620 930,605 945,650 970,610 1003,582 1012,700 1028,880 1035,880 1055,760 1075,730 1090,690 1105,720 1125,710 1145,650 1170,710 1190,630 1198,695`), '#3f9a44', 1)}
    ${curve(z(`88,715 100,620 112,600 130,685 150,600 170,570 195,570 210,660 225,745 245,740 265,830 280,855 295,740 310,610 335,560 355,590 385,552 415,570 440,650 465,790 480,850 510,855 525,810 555,800 580,810 610,760 625,640 645,620 665,770 680,845 695,720 710,695 725,740 750,670 775,730 800,770 815,680 830,590 845,610 870,815 895,700 925,615 955,640 975,620 1003,590 1018,760 1040,865 1060,770 1090,700 1120,710 1148,665 1175,695 1195,660`), '#e8412e', 1)}
    ${[['80.00', 1105.5], ['40.00', 1149], ['0.00', 1192.5]].map(l => label(63, l[1], l[0], '#b2b5be', 'end')).join('')}`;
}
function rightStoch() {
    const z = s => fromCrop(s, 1240, 1.2666, 900, 3);
    return `
    <rect x="1306" y="1148.5" width="1096" height="13" fill="#2c2c2e"/>
    ${hline(1306, 2402, 1148.5, '#707070', 1.6)}${hline(1306, 2402, 1161.5, '#707070', 1.6)}
    ${hline(1306, 2402, 1142.5, '#4d4d4d', 1, 'stroke-dasharray="3 3"')}
    ${hline(1306, 2402, 1106.5, '#f44336', 1.4)}${hline(1306, 2402, 1177.5, '#4caf50', 1.4)}
    ${curve(z(`82,547 120,560 160,558 195,575 240,562 265,580 300,572 330,585 350,565 370,610 400,640 440,720 470,760 490,800 510,810 530,800 555,820 580,810 600,845 630,880 660,830 700,700 750,605 785,640 810,665 840,705 870,695 900,760 950,820 1000,830 1060,858 1100,840 1160,800 1190,720 1220,570 1240,570 1280,600 1315,650 1380,667`), '#3f9a44', 1.2)}
    ${curve(z(`82,560 110,550 160,553 200,565 250,568 300,573 340,580 370,580 420,620 450,660 490,700 530,760 560,800 600,815 640,845 670,850 700,820 740,730 780,640 810,630 840,650 880,690 920,740 970,795 1020,815 1050,822 1090,845 1130,840 1170,815 1210,730 1250,630 1290,598 1320,610 1380,652`), '#e8412e', 1.3)}
    ${curve(z(`82,735 92,790 102,760 125,870 145,730 165,790 180,860 190,870 220,590 237,558 260,820 285,680 305,590 325,640 335,610 352,620 372,815 390,660 405,650 440,745 455,670 478,830 500,790 520,600 537,565 560,700 590,870 615,840 635,600 650,560 680,620 700,565 715,590 732,560 750,610 770,875 800,680 815,680 860,800 883,870 905,700 915,670 935,765 960,600 970,585 990,640 1010,815 1030,740 1060,590 1078,570 1100,700 1115,690 1138,630 1145,665 1170,565 1190,595 1215,548 1220,550 1240,720 1275,880 1295,850 1318,875 1335,745 1357,855 1370,805 1378,815`), '#3f9a44', 1)}
    ${curve(z(`82,703 100,770 125,850 150,730 175,830 190,855 215,680 237,570 255,770 270,790 300,660 315,600 350,625 372,785 400,660 420,700 440,725 458,680 487,810 510,770 540,580 565,750 600,860 630,690 658,570 680,620 705,570 720,590 745,580 780,835 810,690 840,760 865,830 888,850 920,680 940,765 975,600 1000,660 1020,800 1050,650 1080,580 1110,700 1140,650 1178,570 1195,585 1222,555 1250,720 1285,878 1310,860 1345,765 1368,820 1378,810`), '#e8412e', 1)}
    ${[['80.00', 1106.5], ['40.00', 1154], ['0.00', 1201]].map(l => label(1295, l[1], l[0], '#b2b5be', 'end')).join('')}`;
}

// ---------- axes ----------
const leftAxis = [];
for (let p = 8800, y = 42.4; p >= 7300; p -= 100, y += 56.6) leftAxis.push([p.toLocaleString('en-US') + '.0', y]);
const rightAxis = [];
for (let p = 9200, y = 98.7; p >= 6200; p -= 200, y += 54.8) rightAxis.push([p.toLocaleString('en-US') + '.0', y]);
const axisText = (list, x, anchor = 'start') => list.map(l => label(x, l[1], l[0], '#94969f', anchor)).join('');

const CHARTS = {
    left: {
        price: () => leftPrice() + axisText(leftAxis, 1221, 'end') +
            `<rect x="1167" y="375" width="66.5" height="31" fill="#ff0000"/>` +
            label(1175.5, 383, '8,200.3', '#fff') + label(1175.5, 397, '04:10:03', '#fff'),
        osc: () => leftOsc() + axisText([['80.0', 957.5], ['40.0', 992], ['0.0', 1026.5], ['\u221240.0', 1061.5]], 1175),
        stoch: () => leftStoch() + axisText([['80.00', 1104], ['40.00', 1151.5], ['0.00', 1198]], 1175),
        time: [['Apr', 154], ['May', 289], ['Jun', 432], ['Jul', 555], ['Aug', 697], ['Sep', 832], ['Oct', 962], ['Nov', 1103]],
        z: 41.5, a: 1202
    },
    right: {
        price: () => rightPrice() + axisText(rightAxis, 2456.5, 'end') +
            `<rect x="2403" y="365" width="60" height="31" fill="#ff0000"/>` +
            label(2411, 373, '8,200.3', '#fff') + label(2411, 387, '3d 5h', '#fff'),
        osc: () => rightOsc() + axisText([['80.0', 955], ['40.0', 991.5], ['0.0', 1029], ['\u221240.0', 1065]], 2411),
        stoch: () => rightStoch() + axisText([['100.00', 1076.5], ['80.00', 1108], ['60.00', 1138], ['40.00', 1169], ['20.00', 1199]], 2411),
        time: [['Sep', 1372.5], ['2022', 1473.5, 1], ['May', 1574], ['Sep', 1681], ['2023', 1782, 1], ['May', 1883.5], ['Aug', 1966], ['2024', 2091, 1], ['May', 2197.5], ['Sep', 2298.5]],
        z: 1274, a: 2435
    }
};

// ---------- components ----------
class TvTopbar extends HTMLElement {
    constructor() {
        super();
        this.attachShadow({ mode: 'open' });
        this.shadowRoot.innerHTML = `
            <style>
                :host { display: flex; align-items: center; height: 25px; padding: 0 8px; color: #c3c6ce; font: 12.1px Inter, sans-serif; white-space: nowrap; }
            </style>
            <slot></slot>`;
    }
}
customElements.define('tv-topbar', TvTopbar);

class TvFooter extends HTMLElement {
    constructor() {
        super();
        this.attachShadow({ mode: 'open' });
        this.shadowRoot.innerHTML = `
            <style>
                :host { display: flex; align-items: center; gap: 4px; height: 34px; padding: 0 10px; color: #b2b5be; font: 500 13px Inter, sans-serif; }
                svg { width: 19px; height: 15px; fill: #d1d4dc; }
            </style>
            <svg viewBox="0 4 36 18"><path d="M14 22H7V11H0V4h14v18zM28 22h-8l7.5-18h8L28 22z"/><circle cx="20" cy="8" r="4"/></svg>
            <span>TradingView</span>`;
    }
}
customElements.define('tv-footer', TvFooter);

// one stacked pane: its svg uses page coordinates through the viewBox
class PlotPane extends HTMLElement {
    constructor() {
        super();
        this.attachShadow({ mode: 'open' });
        this.shadowRoot.innerHTML = `
            <style>
                :host { display: block; overflow: hidden; background: #000; }
                svg { display: block; width: 100%; height: 100%; font: 12.6px Inter, sans-serif; }
            </style>
            <svg xmlns="http://www.w3.org/2000/svg"></svg>`;
    }
    draw(x, y, w, h, content) {
        const svg = this.shadowRoot.querySelector('svg');
        svg.setAttribute('viewBox', `${x} ${y} ${w} ${h}`);
        svg.innerHTML = content;
    }
}
customElements.define('plot-pane', PlotPane);

class CurrencyBadge extends HTMLElement {
    constructor() {
        super();
        this.attachShadow({ mode: 'open' });
        this.shadowRoot.innerHTML = `
            <style>
                :host { position: absolute; top: 5px; right: 4px; width: 58px; height: 26px; box-sizing: border-box; padding-left: 9px; display: flex; align-items: center; background: #131722; border: 1px solid #2f333e; border-radius: 4px; color: #b2b5be; font: 12.6px Inter, sans-serif; }
            </style>
            <slot></slot>`;
    }
}
customElements.define('currency-badge', CurrencyBadge);

class TvChart extends HTMLElement {
    constructor() {
        super();
        this.attachShadow({ mode: 'open' });
        this.shadowRoot.innerHTML = `
            <style>
                :host { display: flex; flex-direction: column; position: relative; flex: none; height: 1205px; background: #000; box-shadow: 0 0 0 2px #262a35; }
                plot-pane + plot-pane { border-top: 1px solid #2a2e39; }
            </style>
            <plot-pane id="price"></plot-pane>
            <plot-pane id="osc"></plot-pane>
            <plot-pane id="stoch"></plot-pane>
            <plot-pane id="time" style="border:0"></plot-pane>
            <slot></slot>`;
    }
    connectedCallback() {
        const cfg = CHARTS[this.getAttribute('name')];
        const left = +this.getAttribute('x'), width = +this.getAttribute('w');
        const seps = this.getAttribute('seps').split(',').map(Number);
        this.style.width = width + 'px';
        const root = this.shadowRoot;
        const put = (id, y0, y1, content) => {
            const el = root.getElementById(id);
            el.style.height = (y1 - y0) + 'px';
            el.style.flex = 'none';
            el.draw(left, y0, width, y1 - y0, content);
        };
        put('price', 27, seps[0], cfg.price());
        put('osc', seps[0], seps[1], cfg.osc());
        put('stoch', seps[1], 1206, cfg.stoch());
        put('time', 1206, 1232,
            cfg.time.map(t => label(t[1], 1219.5, t[0], t[2] ? '#c8cad2' : '#a5a8b1', 'middle', t[2] ? 'font-weight="600"' : '')).join('') +
            [['Z', cfg.z], ['A', cfg.a]].map(b => `<circle cx="${b[1]}" cy="1219" r="9" fill="#20232d"/>` + label(b[1], 1219.5, b[0], '#6f727c', 'middle', 'font-size="9.5"')).join(''));
    }
}
customElements.define('tv-chart', TvChart);

class TvSnapshot extends HTMLElement {
    constructor() {
        super();
        this.attachShadow({ mode: 'open' });
        this.shadowRoot.innerHTML = `
            <style>
                :host { display: flex; flex-direction: column; width: 2478px; height: 1268px; overflow: hidden; background: #1e222d; }
                .charts { display: flex; gap: 6px; padding: 2px 10px 0; }
            </style>
            <tv-topbar>Tickmill published on TradingView.com, Oct 08, 2024 16:49 UTC+1</tv-topbar>
            <div class="charts">
                <tv-chart name="left" x="10" w="1228" seps="946,1069"></tv-chart>
                <tv-chart name="right" x="1244" w="1224" seps="948,1068"><currency-badge>GBP</currency-badge></tv-chart>
            </div>
            <tv-footer></tv-footer>`;
    }
}
customElements.define('tv-snapshot', TvSnapshot);
</script>
</body>
</html>
